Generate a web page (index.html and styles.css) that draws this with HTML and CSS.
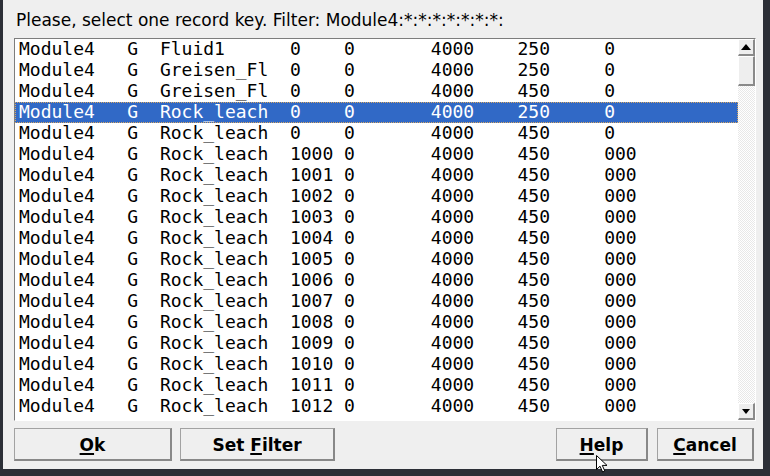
FILE: index.html
```html
<!DOCTYPE html>
<html>
<head>
<meta charset="utf-8">
<link rel="stylesheet" href="styles.css">
</head>
<body>
<div class="dialog">
  <div class="prompt">Please, select one record key. Filter: Module4:*:*:*:*:*:*:*:</div>
  <div class="listframe">
    <div class="list">
<div class="row">Module4   G  Fluid1      0    0       4000    250     0</div>
<div class="row">Module4   G  Greisen_Fl  0    0       4000    250     0</div>
<div class="row">Module4   G  Greisen_Fl  0    0       4000    450     0</div>
<div class="row selected">Module4   G  Rock_leach  0    0       4000    250     0</div>
<div class="row">Module4   G  Rock_leach  0    0       4000    450     0</div>
<div class="row">Module4   G  Rock_leach  1000 0       4000    450     000</div>
<div class="row">Module4   G  Rock_leach  1001 0       4000    450     000</div>
<div class="row">Module4   G  Rock_leach  1002 0       4000    450     000</div>
<div class="row">Module4   G  Rock_leach  1003 0       4000    450     000</div>
<div class="row">Module4   G  Rock_leach  1004 0       4000    450     000</div>
<div class="row">Module4   G  Rock_leach  1005 0       4000    450     000</div>
<div class="row">Module4   G  Rock_leach  1006 0       4000    450     000</div>
<div class="row">Module4   G  Rock_leach  1007 0       4000    450     000</div>
<div class="row">Module4   G  Rock_leach  1008 0       4000    450     000</div>
<div class="row">Module4   G  Rock_leach  1009 0       4000    450     000</div>
<div class="row">Module4   G  Rock_leach  1010 0       4000    450     000</div>
<div class="row">Module4   G  Rock_leach  1011 0       4000    450     000</div>
<div class="row">Module4   G  Rock_leach  1012 0       4000    450     000</div>
    </div>
    <div class="scrollbar">
      <div class="sb-btn up"><svg width="10" height="6" viewBox="0 0 10 6"><polygon points="5,0 10,6 0,6" fill="#000"/></svg></div>
      <div class="thumb"></div>
      <div class="trough"></div>
      <div class="sb-btn down"><svg width="8" height="5" viewBox="0 0 8 5"><polygon points="0,0 8,0 4,5" fill="#000"/></svg></div>
    </div>
  </div>
  <div class="buttons">
    <div class="btn ok"><u>O</u>k</div>
    <div class="btn filter">Set <u>F</u>ilter</div>
    <div class="btn help"><u>H</u>elp</div>
    <div class="btn cancel"><u>C</u>ancel</div>
  </div>
</div>
<svg class="cursor" width="12" height="18" viewBox="0 0 12 18"><path d="M0.5,0.5 L0.5,14.5 L4,11.2 L6.6,17 L8.8,16 L6.3,10.4 L11,10.4 Z" fill="#fff" stroke="#000" stroke-width="1" stroke-linejoin="miter"/></svg>
</body>
</html>
```

FILE: styles.css
```css
html, body {
  margin: 0;
  padding: 0;
}
body {
  width: 770px;
  height: 476px;
  background: #2c2f37;
  position: relative;
  overflow: hidden;
}
.dialog {
  margin-left: 3px;
  height: 469px;
  background: #efefef;
  padding: 0 7px 0 11px;
  box-sizing: content-box;
  width: 742px;
}
.prompt {
  height: 38px;
  box-sizing: border-box;
  padding: 10px 0 0 2px;
  font-family: "DejaVu Sans", sans-serif;
  font-size: 17px;
  line-height: 20px;
  color: #000;
  white-space: nowrap;
}
.listframe {
  display: flex;
  height: 383px;
  box-sizing: border-box;
  border-top: 1px solid #7d7d7d;
  border-left: 1px solid #7d7d7d;
  border-bottom: 1px solid #ffffff;
  border-right: 1px solid #ffffff;
}
.list {
  flex: 1;
  background: #ffffff;
  overflow: hidden;
}
.row {
  height: 21px;
  line-height: 20px;
  padding-left: 4px;
  font-family: "DejaVu Sans Mono", monospace;
  font-size: 18px;
  color: #000;
  white-space: pre;
  box-sizing: border-box;
}
.row.selected {
  background: #3169c6;
  color: #fff;
  position: relative;
  z-index: 0;
}
.row.selected::after {
  content: "";
  position: absolute;
  inset: 0;
  border: 1px dotted #d7a863;
  z-index: -1;
}
.scrollbar {
  width: 17px;
  display: flex;
  flex-direction: column;
  background: #efefef;
}
.sb-btn {
  height: 17px;
  box-sizing: border-box;
  background: #eeeeee;
  border-top: 1px solid #ffffff;
  border-left: 1px solid #ffffff;
  border-right: 2px solid #8a8a8a;
  border-bottom: 2px solid #8a8a8a;
  display: flex;
  align-items: center;
  justify-content: center;
}
.sb-btn svg { display: block; }
.thumb {
  height: 30px;
  box-sizing: border-box;
  background: #eeeeee;
  border-top: 1px solid #ffffff;
  border-left: 1px solid #ffffff;
  border-right: 2px solid #8a8a8a;
  border-bottom: 2px solid #8a8a8a;
}
.trough {
  flex: 1;
  background: repeating-conic-gradient(#ffffff 0 25%, #e8e8e8 0 50%) 0 0 / 2px 2px;
}
.buttons {
  display: flex;
  margin-top: 7px;
  height: 33px;
}
.btn {
  box-sizing: border-box;
  height: 33px;
  background: #efefef;
  border: 1px solid #a2a2a2;
  border-right: 2px solid #888888;
  border-bottom: 2px solid #888888;
  font-family: "DejaVu Sans", sans-serif;
  font-weight: bold;
  font-size: 17px;
  line-height: 32px;
  text-align: center;
  color: #000;
}
.btn u {
  text-decoration-thickness: 2px;
  text-underline-offset: 2px;
}
.ok { width: 158px; }
.filter { width: 155px; margin-left: 8px; }
.help { width: 92px; margin-left: auto; }
.cancel { width: 97px; margin-left: 9px; margin-right: 2px; }
.cursor {
  position: absolute;
  left: 596px;
  top: 455px;
}
```
